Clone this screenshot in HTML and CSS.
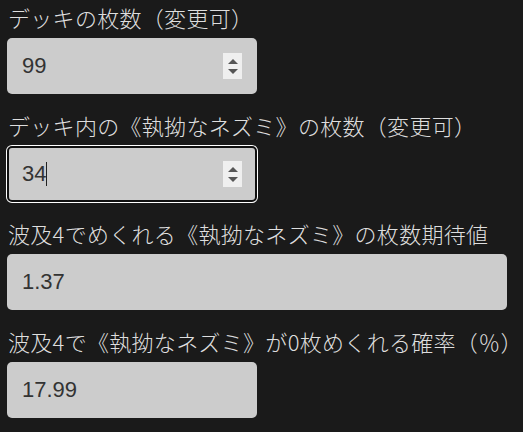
FILE: index.html
```html
<!DOCTYPE html>
<html lang="ja">
<head>
<meta charset="utf-8">
<title>波及計算</title>
<link rel="stylesheet" href="styles.css">
</head>
<body>
<main class="form">
  <div class="group">
    <div class="label">デッキの枚数（変更可）</div>
    <div class="field">
      <span class="value">99</span>
      <span class="spin"><span class="tri up"></span><span class="tri down"></span></span>
    </div>
  </div>
  <div class="group">
    <div class="label">デッキ内の《執拗なネズミ》の枚数（変更可）</div>
    <div class="field focused">
      <span class="value caret">34</span>
      <span class="spin"><span class="tri up"></span><span class="tri down"></span></span>
    </div>
  </div>
  <div class="group">
    <div class="label">波及4でめくれる《執拗なネズミ》の枚数期待値</div>
    <div class="field wide">
      <span class="value">1.37</span>
    </div>
  </div>
  <div class="group">
    <div class="label">波及4で《執拗なネズミ》が0枚めくれる確率（％）</div>
    <div class="field">
      <span class="value">17.99</span>
    </div>
  </div>
</main>
</body>
</html>
```
FILE: styles.css
```css
html, body {
  margin: 0;
  padding: 0;
  background: #1a1a1a;
}
.form {
  display: flex;
  flex-direction: column;
  gap: 14px;
  padding: 0 0 0 7px;
}
.group {
  display: flex;
  flex-direction: column;
  align-items: flex-start;
  gap: 4px;
}
.label {
  font-family: "Noto Sans CJK JP", "Liberation Sans", sans-serif;
  font-size: 22px;
  font-weight: 300;
  letter-spacing: 0.3px;
  line-height: 34px;
  color: #dedede;
  padding-left: 1px;
  white-space: nowrap;
}
.field {
  box-sizing: border-box;
  width: 250px;
  height: 56px;
  background: #cccccc;
  border-radius: 5px;
  display: flex;
  align-items: center;
  justify-content: space-between;
  padding: 0 15px 0 15px;
}
.field.wide {
  width: 500px;
}
.field.focused {
  border: 2px solid #111111;
  box-shadow: 0 0 0 1px #ffffff;
  padding: 0 13px 0 13px;
}
.value {
  font-family: "Liberation Sans", Arial, sans-serif;
  font-size: 22px;
  color: #333333;
  line-height: 24px;
}
.caret {
  border-right: 1px solid #222222;
  padding-right: 0;
}
.spin {
  width: 19px;
  height: 26px;
  background: #efefef;
  display: flex;
  flex-direction: column;
  align-items: center;
  justify-content: center;
  gap: 5px;
}
.tri {
  width: 0;
  height: 0;
  border-left: 5px solid transparent;
  border-right: 5px solid transparent;
}
.tri.up {
  border-bottom: 5px solid #555555;
}
.tri.down {
  border-top: 5px solid #555555;
}
```
